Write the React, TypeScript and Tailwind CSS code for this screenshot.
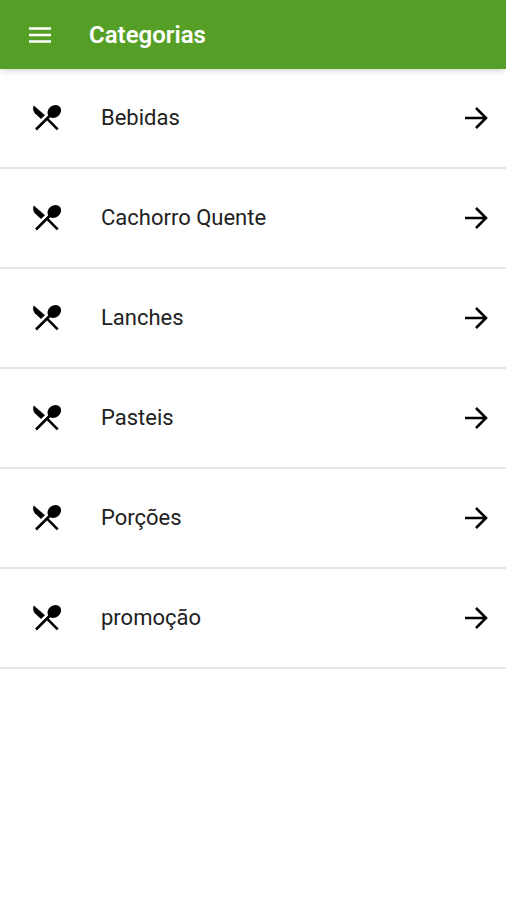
const categories = ["Bebidas", "Cachorro Quente", "Lanches", "Pasteis", "Porções", "promoção"];

function MenuIcon() {
  return (
    <svg viewBox="0 0 24 18" className="h-[18px] w-6" aria-hidden="true">
      <path d="M1 2.5h22M1 9h22M1 15.5h22" fill="none" stroke="currentColor" strokeWidth="2.6" />
    </svg>
  );
}

// Crossed knife and spoon
function UtensilsIcon() {
  return (
    <svg viewBox="0 0 28 26" className="h-[26px] w-7 shrink-0" aria-hidden="true">
      <path d="M0.8 0.6L12 10.2L8 14.1L1.8 8.2Q-1 4.6 0.8 0.6Z" fill="currentColor" />
      <ellipse cx="21.3" cy="6.5" rx="7.2" ry="6" transform="rotate(-38 21.3 6.5)" fill="currentColor" />
      <path d="M18 9.5L3 24.5M14.5 14.2L24.7 24.4" fill="none" stroke="currentColor" strokeWidth="2.6" />
    </svg>
  );
}

function ArrowIcon() {
  return (
    <svg viewBox="0 0 24 24" className="h-6 w-6 shrink-0" aria-hidden="true">
      <path d="M1 12h20.5M12 2L22 12L12 22" fill="none" stroke="currentColor" strokeWidth="2.6" />
    </svg>
  );
}

export default function App() {
  return (
    <div className="min-h-screen bg-white font-['Roboto',sans-serif]">
      {/* App bar */}
      <header className="flex h-[69px] items-center gap-[37px] bg-[#569f26] px-7 text-white shadow-md">
        <button type="button" aria-label="Menu">
          <MenuIcon />
        </button>
        <h1 className="text-2xl font-semibold">Categorias</h1>
      </header>

      {/* Category list */}
      <ul>
        {categories.map((category) => (
          <li key={category} className="border-b-2 border-[#e6e6e6]">
            <button
              type="button"
              className="flex h-[98px] w-full items-center pr-[18px] pl-[33px] text-left text-black"
            >
              <UtensilsIcon />
              <span className="ml-10 flex-1 pb-0.5 text-[22px] text-[#222222]">{category}</span>
              <ArrowIcon />
            </button>
          </li>
        ))}
      </ul>
    </div>
  );
}
